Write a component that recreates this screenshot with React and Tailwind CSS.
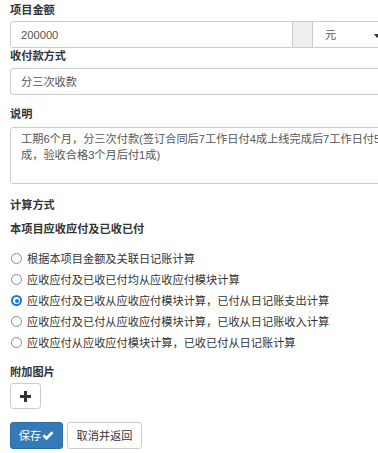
import React from "react";

const radios = [
  "根据本项目金额及关联日记账计算",
  "应收应付及已收已付均从应收应付模块计算",
  "应收应付及已收从应收应付模块计算，已付从日记账支出计算",
  "应收应付及已付从应收应付模块计算，已收从日记账收入计算",
  "应收应付从应收应付模块计算，已收已付从日记账计算",
];

function Radio({ checked }) {
  if (checked) {
    return (
      <span className="flex h-[11px] w-[11px] shrink-0 items-center justify-center rounded-full bg-[#1a73e8]">
        <span className="flex h-[7px] w-[7px] items-center justify-center rounded-full bg-white">
          <span className="h-[4px] w-[4px] rounded-full bg-[#1a73e8]" />
        </span>
      </span>
    );
  }
  return <span className="h-[11px] w-[11px] shrink-0 rounded-full border border-[#8a8a8a] bg-white" />;
}

export default function App() {
  return (
    <div className="h-[453px] w-[378px] overflow-hidden bg-white font-['Liberation_Sans','Noto_Sans_CJK_SC',sans-serif] text-[11.2px] leading-[16px] text-[#333]">
      <div className="ml-[10px] w-[382px] pt-[2px]">
        <div className="font-bold">项目金额</div>
        <div className="mt-[3px] flex h-[27px]">
          <div className="flex flex-1 items-center rounded-l-[3px] border border-[#ccc] px-[10px] text-[#555]">200000</div>
          <div className="w-[19px] border-y border-[#ccc] bg-[#eee]" />
          <div className="relative flex w-[80px] items-center border border-[#ccc] pl-[12px] text-[#555]">
            元
            <span className="absolute left-[61px] top-[12px] h-0 w-0 border-x-[3px] border-t-[4px] border-x-transparent border-t-[#333]" />
          </div>
        </div>

        <div className="font-bold">收付款方式</div>
        <div className="mt-[4px] flex h-[27px] items-center rounded-[3px] border border-[#ccc] px-[10px] text-[#555]">分三次收款</div>

        <div className="mt-[11px] font-bold">说明</div>
        <div className="mt-[5px] h-[57px] rounded-[3px] border border-[#ccc] px-[10px] pt-[3px] text-[#555]">
          <div className="whitespace-nowrap">工期6个月，分三次付款(签订合同后7工作日付4成上线完成后7工作日付5</div>
          <div className="whitespace-nowrap">成，验收合格3个月后付1成)</div>
        </div>

        <div className="mt-[13px] font-bold">计算方式</div>
        <div className="mt-[8px] font-bold">本项目应收应付及已收已付</div>

        <div className="mt-[11px] flex flex-col">
          {radios.map((r, i) => (
            <label key={i} className="flex h-[21px] items-center gap-[5px] pl-[1px]">
              <Radio checked={i === 2} />
              <span className="whitespace-nowrap">{r}</span>
            </label>
          ))}
        </div>

        <div className="mt-[11px] font-bold">附加图片</div>
        <button className="mt-[3px] flex h-[26px] w-[31px] items-center justify-center rounded-[3px] border border-[#ccc] bg-white">
          <svg width="11" height="11" viewBox="0 0 11 11">
            <path d="M4 0h3v4h4v3H7v4H4V7H0V4h4z" fill="#333" />
          </svg>
        </button>

        <div className="mt-[13px] flex gap-[4px]">
          <button className="flex h-[27px] w-[53px] items-center justify-center gap-[1px] rounded-[3px] border border-[#2e6da4] bg-[#337ab7] text-white">
            保存
            <svg width="12" height="10" viewBox="0 0 12 10">
              <path d="M0.5 5.2L2.4 3.3L4.5 5.4L9.6 0.3L11.5 2.2L4.5 9.2Z" fill="#fff" />
            </svg>
          </button>
          <button className="flex h-[27px] w-[75px] items-center justify-center rounded-[3px] border border-[#ccc] bg-white text-[#333]">
            取消并返回
          </button>
        </div>
      </div>
    </div>
  );
}
